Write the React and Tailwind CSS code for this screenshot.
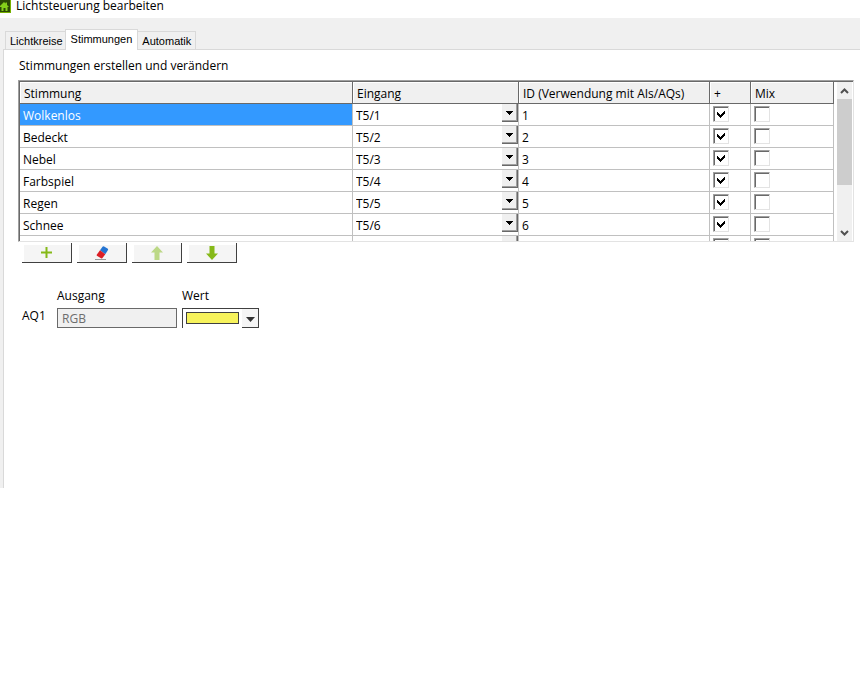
import { useState } from 'react';

const MOODS = [
  { id: 1, name: 'Wolkenlos', input: 'T5/1' },
  { id: 2, name: 'Bedeckt', input: 'T5/2' },
  { id: 3, name: 'Nebel', input: 'T5/3' },
  { id: 4, name: 'Farbspiel', input: 'T5/4' },
  { id: 5, name: 'Regen', input: 'T5/5' },
  { id: 6, name: 'Schnee', input: 'T5/6' },
  { id: '', name: '', input: '' },
];

const INPUTS = MOODS.map((mood) => mood.input);

function HeaderCell({ children }) {
  return (
    <th
      scope="col"
      className="h-[22px] border-r border-b border-[#696969] bg-[#f0f0f0] p-0 pt-[2px] pl-1 text-left font-normal leading-4 whitespace-nowrap shadow-[inset_1px_1px_0_#fff]"
    >
      {children}
    </th>
  );
}

function Check({ label, checked, onChange }) {
  return (
    <label className="relative block size-4">
      <input
        type="checkbox"
        aria-label={label}
        checked={checked}
        onChange={onChange}
        className="block size-4 appearance-none border border-t-[#a0a0a0] border-r-[#e3e3e3] border-b-[#e3e3e3] border-l-[#a0a0a0] bg-white shadow-[inset_1px_1px_0_#696969]"
      />
      {checked && (
        <svg className="pointer-events-none absolute top-1 left-1" width="9" height="8" viewBox="0 0 9 8" shapeRendering="crispEdges">
          <path d="M0 2h1v1h1v1h1v1h1v-1h1v-1h1v-1h1v-1h1v3h-1v1h-1v1h-1v1h-1v1h-1v-1h-1v-1h-1v-1h-1z" />
        </svg>
      )}
    </label>
  );
}

function MoodRow({ mood, selected, onSelect }) {
  const [input, setInput] = useState(mood.input);
  const [active, setActive] = useState(true);
  const [mix, setMix] = useState(false);
  const cell = 'h-[22px] border-r border-b border-[#c0c0c0] p-0 leading-4';

  return (
    <tr onClick={onSelect}>
      <td className={`${cell} pt-[2px] pl-[3px] ${selected ? 'bg-[#3399ff] text-white' : ''}`}>{mood.name}</td>
      <td className={cell}>
        <div className="relative h-[21px]">
          <select
            aria-label={`Eingang ${mood.name}`}
            value={input}
            onChange={(e) => setInput(e.target.value)}
            className="block h-[21px] w-full appearance-none bg-transparent pt-[2px] pl-[3px] outline-none"
          >
            {INPUTS.map((name) => (
              <option key={name}>{name}</option>
            ))}
          </select>
          <span className="pointer-events-none absolute top-0 right-0 flex h-[18px] w-4 items-center justify-center border-r border-b border-[#696969] bg-[#f0f0f0] pt-px shadow-[inset_-1px_-1px_0_#a0a0a0]">
            <svg width="7" height="4" viewBox="0 0 7 4" shapeRendering="crispEdges">
              <path d="M0 0h7v1h-1v1h-1v1h-1v1h-1v-1h-1v-1h-1v-1h-1z" />
            </svg>
          </span>
        </div>
      </td>
      <td className={`${cell} pt-[2px] pl-[3px]`}>{mood.id}</td>
      <td className={`${cell} pt-[2px] pl-[3px] align-top`}>
        <Check label={`${mood.name} +`} checked={active} onChange={() => setActive(!active)} />
      </td>
      <td className={`${cell} pt-[2px] pl-[3px] align-top`}>
        <Check label={`${mood.name} Mix`} checked={mix} onChange={() => setMix(!mix)} />
      </td>
    </tr>
  );
}

function MoodTable() {
  const [selected, setSelected] = useState(1);

  return (
    <div className="flex h-[162px] border-t border-r border-b border-l border-t-[#a0a0a0] border-r-[#e3e3e3] border-b-[#e3e3e3] border-l-[#a0a0a0]">
      <div className="flex-1 overflow-hidden border-t border-l border-[#696969]">
        <table className="w-full table-fixed border-separate border-spacing-0">
          <colgroup>
            <col />
            <col className="w-[166px]" />
            <col className="w-[191px]" />
            <col className="w-[41px]" />
            <col className="w-[83px]" />
          </colgroup>
          <thead>
            <tr>
              <HeaderCell>Stimmung</HeaderCell>
              <HeaderCell>Eingang</HeaderCell>
              <HeaderCell>ID (Verwendung mit AIs/AQs)</HeaderCell>
              <HeaderCell>+</HeaderCell>
              <HeaderCell>Mix</HeaderCell>
            </tr>
          </thead>
          <tbody>
            {MOODS.map((mood) => (
              <MoodRow key={mood.id} mood={mood} selected={mood.id === selected} onSelect={() => setSelected(mood.id)} />
            ))}
          </tbody>
        </table>
      </div>
      {/* Scrollbar */}
      <div className="flex w-[19px] flex-col border-t border-[#696969] pr-px pl-[3px]">
        <div className="flex flex-1 flex-col bg-[#f0f0f0]">
          <button type="button" aria-label="Nach oben" className="flex h-[17px] items-center justify-center">
            <svg width="9" height="6" viewBox="0 0 9 6" fill="none" stroke="#505050" strokeWidth="2">
              <path d="M1 5l3.500-3.500 3.500 3.500" />
            </svg>
          </button>
          <div className="h-[86px] bg-[#cdcdcd]" />
          <button type="button" aria-label="Nach unten" className="mt-auto flex h-[17px] items-center justify-center">
            <svg width="9" height="6" viewBox="0 0 9 6" fill="none" stroke="#505050" strokeWidth="2">
              <path d="M1 1l3.500 3.500 3.500-3.500" />
            </svg>
          </button>
        </div>
      </div>
    </div>
  );
}

function ToolButton({ label, disabled, children }) {
  return (
    <button
      type="button"
      aria-label={label}
      disabled={disabled}
      className="flex h-5 w-[50px] items-center justify-center border-r border-b border-[#404040] bg-[#f5f5f5] shadow-[inset_2px_2px_0_#fff]"
    >
      {children}
    </button>
  );
}

function Toolbar() {
  return (
    <div className="mt-px ml-1 flex gap-[5px]">
      <ToolButton label="Hinzufügen">
        <svg width="11" height="11" viewBox="0 0 11 11" stroke="#86b919" strokeWidth="2">
          <path d="M5.500 0v11M0 5.500h11" />
        </svg>
      </ToolButton>
      <ToolButton label="Löschen">
        <svg width="14" height="14" viewBox="0 0 14 14">
          <path d="M5 4.200l2.500-3.400q.6-.8 1.600-.3l3.400 1.900q1 .6.500 1.600l-2.700 4.200z" fill="#2474d2" />
          <path d="M5 4.200l5.300 4-2.600 3.600q-.7.900-1.700.4l-3.700-2.100q-1-.6-.4-1.600z" fill="#dc1f26" />
          <path d="M0 13.500h11" stroke="#999" />
        </svg>
      </ToolButton>
      <ToolButton label="Nach oben verschieben" disabled>
        <svg width="12" height="14" viewBox="0 0 12 14">
          <path d="M6 0l6 6.500h-3.500v7.500h-5v-7.500h-3.500z" fill="#bcd886" />
        </svg>
      </ToolButton>
      <ToolButton label="Nach unten verschieben">
        <svg width="12" height="14" viewBox="0 0 12 14">
          <path d="M6 14l6-6.500h-3.500v-7.500h-5v7.500h-3.500z" fill="#86b919" />
        </svg>
      </ToolButton>
    </div>
  );
}

function OutputForm() {
  return (
    <div className="mt-[25px] ml-1 grid grid-cols-[30px_120px_77px] gap-x-[5px] gap-y-1">
      <span />
      <label htmlFor="output" className="leading-4">Ausgang</label>
      <label htmlFor="value" className="leading-4">Wert</label>
      <span className="leading-4">AQ1</span>
      <input
        id="output"
        disabled
        defaultValue="RGB"
        className="h-5 w-full border border-[#696969] bg-[#f0f0f0] px-1 text-[#6d6d6d]"
      />
      <button
        id="value"
        type="button"
        className="flex h-5 border-t border-l border-[#404040] bg-white"
      >
        <span className="mt-[3px] ml-[3px] h-3 w-[53px] border border-[#404040] bg-[#f7f35c]" />
        <span className="ml-auto flex h-[19px] w-[17px] items-center justify-center border-r border-b border-[#404040] bg-[#f5f5f5] pt-[2px]">
          <svg width="9" height="5" viewBox="0 0 9 5">
            <path d="M0 0h9l-4.500 5z" fill="#333" />
          </svg>
        </span>
      </button>
    </div>
  );
}

export default function App() {
  return (
    <div className="min-h-screen bg-white font-['Open_Sans','Noto_Sans',sans-serif] text-[12px] text-black">
      {/* Title bar */}
      <header className="flex h-[18px] items-start">
        <svg width="11" height="13" viewBox="0 0 11 13">
          <path d="M0 0h11v13h-11z" fill="#76b000" />
          <path d="M0 0h10v12h-10z" fill="#2c4a06" />
          <path d="M0 6l4-4 1.500 1.500v-1h1.500v2.500l2 2h-1.500v4h-2v-3h-2v3h-2v-4h-1.500z" fill="#84d01a" />
        </svg>
        <h1 className="ml-[5px] leading-3">Lichtsteuerung bearbeiten</h1>
      </header>

      <main className="bg-[#f0f0f0] pt-[11px] pl-[3px]">
        {/* Tabs */}
        <div role="tablist" className="flex items-end pl-[2px] font-['Liberation_Sans',Arial,sans-serif] text-[11px] leading-4">
          <button type="button" role="tab" aria-selected="false" className="h-[18px] border-t border-l border-[#d9d9d9] pr-[2px] pl-1">
            Lichtkreise
          </button>
          <button type="button" role="tab" aria-selected="true" className="relative -mb-px h-[21px] border border-b-0 border-[#d9d9d9] bg-white px-[5px] pb-[2px]">
            Stimmungen
          </button>
          <button type="button" role="tab" aria-selected="false" className="h-[18px] border-t border-r border-[#d9d9d9] px-1">
            Automatik
          </button>
        </div>

        <section role="tabpanel" className="min-h-[439px] border-t border-l border-[#d9d9d9] bg-white pt-2 pr-[6px] pl-[14px]">
          <h2 className="pl-px leading-4">Stimmungen erstellen und verändern</h2>
          <div className="mt-[6px]">
            <MoodTable />
          </div>
          <Toolbar />
          <OutputForm />
        </section>
      </main>
    </div>
  );
}
